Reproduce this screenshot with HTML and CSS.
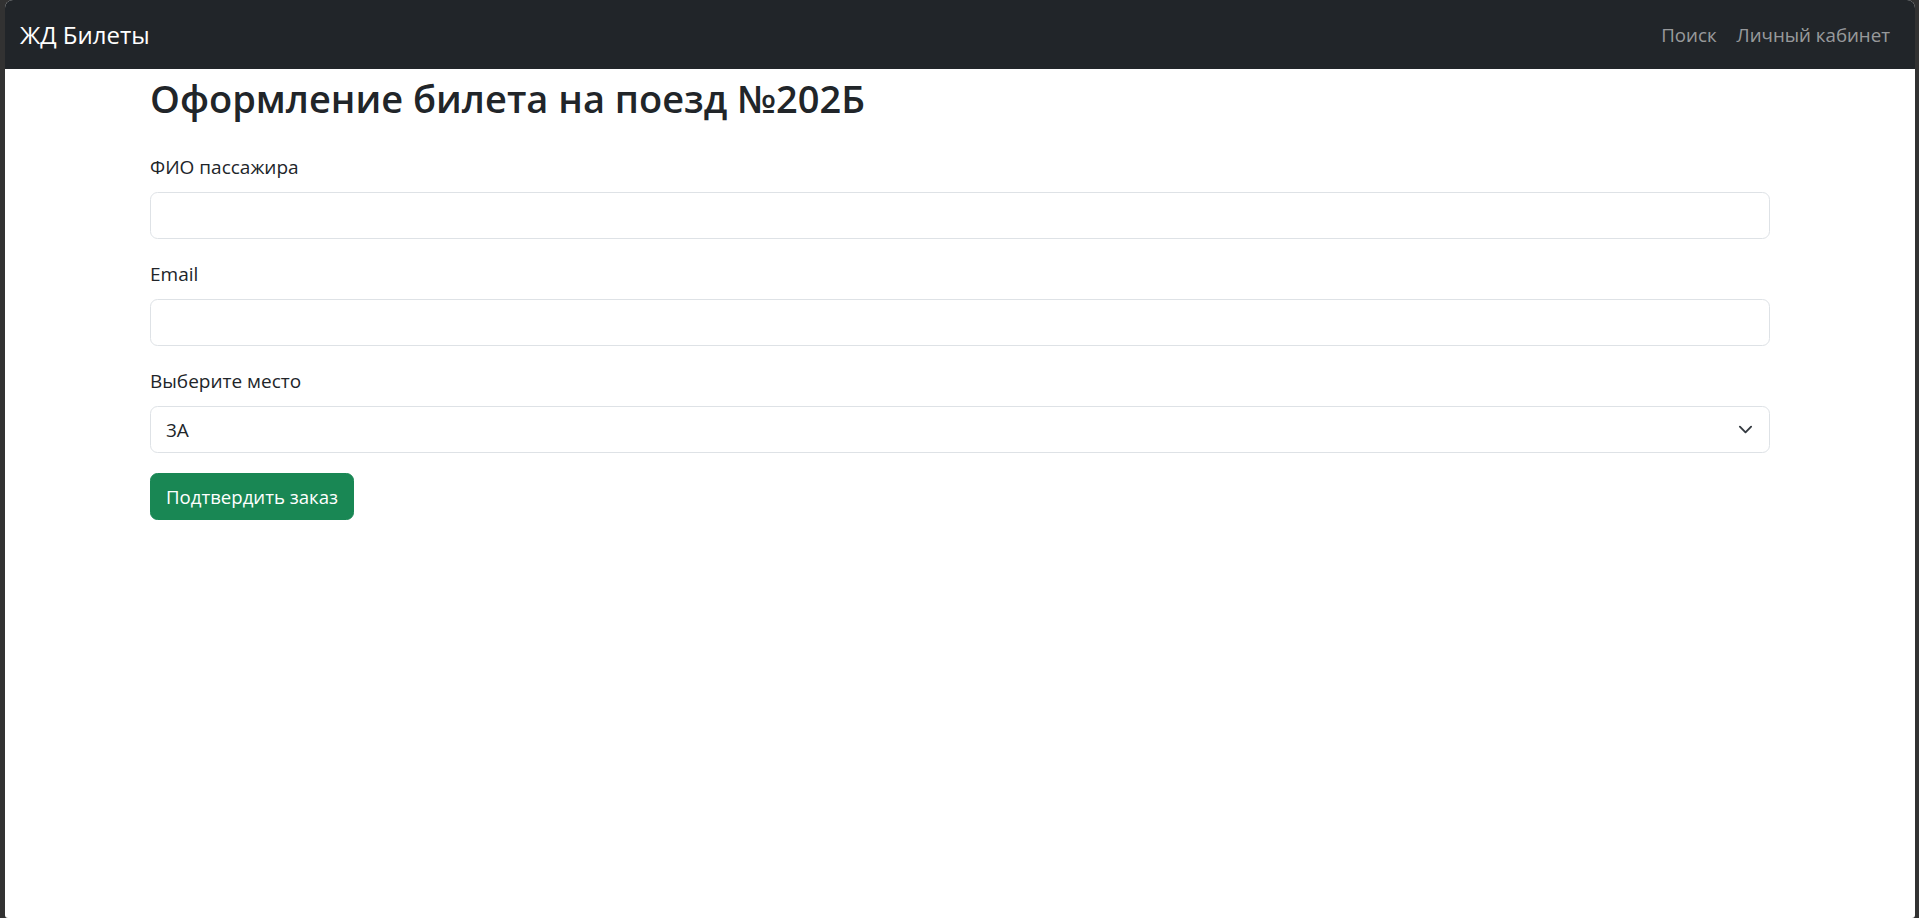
FILE: index.html
```html
<!DOCTYPE html>
<html lang="ru">
<head>
<meta charset="utf-8">
<title>ЖД Билеты</title>
<link rel="stylesheet" href="styles.css">
</head>
<body>
<div class="window">
  <nav class="navbar">
    <a class="brand" href="#">ЖД Билеты</a>
    <div class="nav-links">
      <a class="nav-link" href="#">Поиск</a>
      <a class="nav-link" href="#">Личный кабинет</a>
    </div>
  </nav>
  <main class="container">
    <h2 class="title">Оформление билета на поезд №202Б</h2>
    <form class="order-form">
      <div class="field">
        <label class="label" for="fio">ФИО пассажира</label>
        <input class="control" id="fio" type="text">
      </div>
      <div class="field">
        <label class="label" for="email">Email</label>
        <input class="control" id="email" type="email">
      </div>
      <div class="field">
        <label class="label" for="seat">Выберите место</label>
        <div class="select-wrap">
          <select class="control select" id="seat">
            <option>3А</option>
          </select>
          <svg class="chevron" viewBox="0 0 16 16" width="15" height="15" aria-hidden="true"><path d="m2 5 6 6 6-6" fill="none" stroke="#343a40" stroke-width="2" stroke-linecap="round" stroke-linejoin="round"/></svg>
        </div>
      </div>
      <button class="btn-success" type="button">Подтвердить заказ</button>
    </form>
  </main>
</div>
</body>
</html>
```

FILE: styles.css
```css
* { box-sizing: border-box; }

html, body {
  margin: 0;
  height: 100%;
}

body {
  background: #323232;
  font-family: "Open Sans", "Noto Sans", sans-serif;
  color: #212529;
  overflow: hidden;
}

.window {
  margin: 0 4px 0 5px;
  height: 918px;
  background: #fff;
  border-radius: 8px 8px 3px 3px;
  overflow: hidden;
}

.navbar {
  height: 69px;
  background: #212529;
  display: flex;
  align-items: center;
  justify-content: space-between;
  padding: 0 15px;
}

.brand {
  color: #fff;
  font-size: 24px;
  line-height: 37px;
  text-decoration: none;
}

.nav-links {
  display: flex;
}

.nav-link {
  color: rgba(255, 255, 255, 0.55);
  font-size: 18.7px;
  line-height: 30px;
  padding: 10px;
  text-decoration: none;
}

.container {
  max-width: 1650px;
  margin: 5px auto 0;
  padding: 0 15px;
}

.title {
  font-size: 38px;
  font-weight: 600;
  line-height: 48px;
  margin: 0 0 30px;
}

.field {
  margin-bottom: 20px;
}

.label {
  display: block;
  font-size: 19px;
  line-height: 30px;
  margin-bottom: 10px;
}

.control {
  display: block;
  width: 100%;
  height: 47px;
  border: 1px solid #dee2e6;
  border-radius: 7.5px;
  padding: 7px 15px;
  font: inherit;
  font-size: 19px;
  color: #212529;
  background: #fff;
}

.select-wrap {
  position: relative;
}

.select {
  appearance: none;
  -webkit-appearance: none;
  padding-right: 50px;
}

.chevron {
  position: absolute;
  right: 17px;
  top: 16px;
  pointer-events: none;
}

.btn-success {
  background: #198754;
  border: 1px solid #198754;
  color: #fff;
  font: inherit;
  font-size: 18.6px;
  line-height: 30px;
  padding: 7.5px 15px;
  border-radius: 7.5px;
  cursor: pointer;
}
```
